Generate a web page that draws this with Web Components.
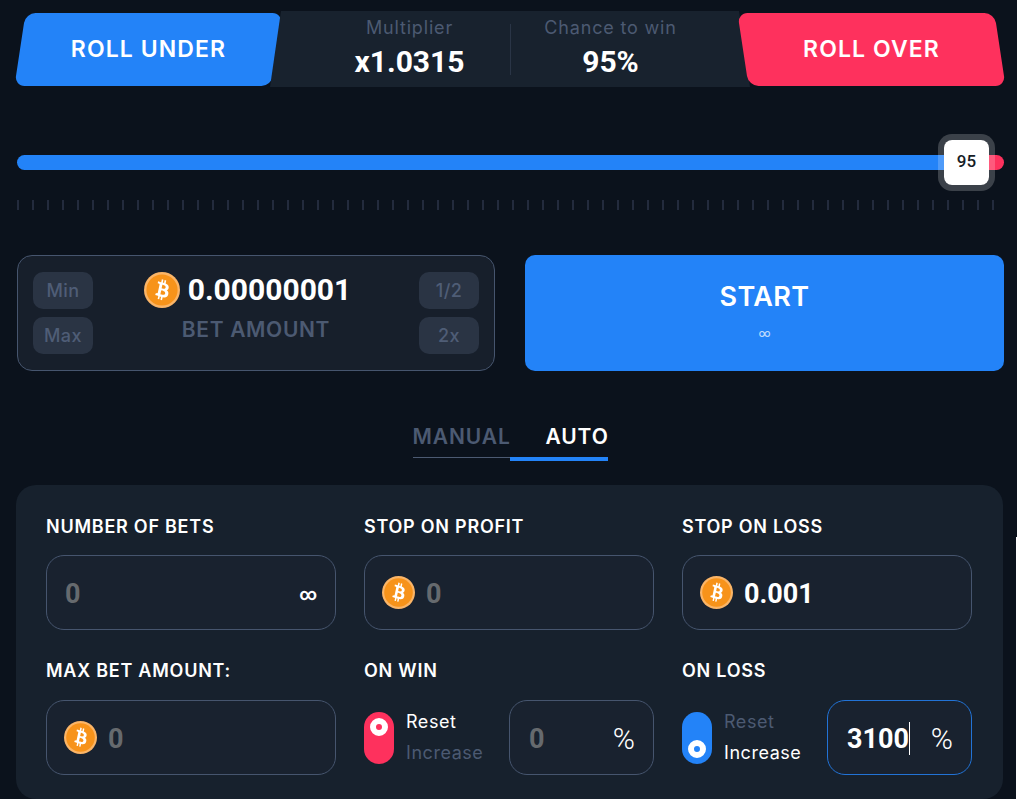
<!DOCTYPE html>
<html>
<head>
<meta charset="utf-8">
<title>Dice</title>
<style>
  html { overflow: hidden; }
  body {
    position: relative;
    margin: 0;
    height: 799px;
    overflow: hidden;
    background-color: #0b121c;
    color: #fff;
    font-family: Inter, 'Open Sans', sans-serif;
  }
  /* 1px white sliver on the right edge of the capture */
  body::after {
    content: '';
    position: absolute;
    top: 537px;
    right: 0;
    bottom: 0;
    width: 1px;
    background-color: #fff;
  }
</style>
</head>
<body>
<dice-app></dice-app>

<script>
// small helper so every element below stays short
function define(name, css, html) {
  customElements.define(name, class extends HTMLElement {
    constructor() {
      super();
      this.attachShadow({ mode: 'open' });
    }
    connectedCallback() {
      const attr = (key, fallback = '') => this.getAttribute(key) ?? fallback;
      this.shadowRoot.innerHTML = `<style>${css}</style>${typeof html === 'function' ? html(attr) : html}`;
    }
  });
}

define('coin-icon', `
  :host { display: block; width: var(--size, 36px); height: var(--size, 36px); flex: none; }
  svg { display: block; width: 100%; height: 100%; }
`, `
  <svg viewBox="0 0 36 36">
    <circle cx="18" cy="18" r="18" fill="#fbb567"/>
    <circle cx="18" cy="18" r="15.6" fill="#f7931a"/>
    <g transform="translate(18 18) scale(1.18 1.38) translate(-11.6 -12)">
      <path fill="#fff" d="M17.288 10.291c.24-1.59-.974-2.45-2.64-3.03l.54-2.153-1.315-.33-.525 2.107c-.345-.087-.705-.167-1.064-.25l.526-2.127-1.32-.33-.54 2.165c-.285-.067-.565-.132-.84-.2l-1.815-.45-.35 1.407s.975.225.955.236c.535.136.63.486.615.766l-1.477 5.92c-.075.166-.24.406-.614.314.015.02-.96-.24-.96-.24l-.66 1.51 1.71.426.93.242-.54 2.19 1.32.327.54-2.17c.36.1.705.19 1.05.273l-.51 2.154 1.32.33.545-2.19c2.24.427 3.93.257 4.64-1.774.57-1.637-.03-2.58-1.217-3.196.854-.193 1.5-.76 1.68-1.93h.01zm-3.01 4.22c-.404 1.64-3.157.75-4.05.53l.72-2.9c.896.23 3.757.67 3.33 2.37zm.41-4.24c-.37 1.49-2.662.735-3.405.55l.654-2.64c.744.18 3.137.524 2.75 2.084v.006z"/>
    </g>
  </svg>
`);

define('roll-button', `
  :host {
    position: relative;
    display: flex;
    align-items: center;
    justify-content: center;
    flex: none;
    width: 265px;
    height: 73px;
    font-size: 23px;
    font-weight: 600;
    letter-spacing: 1.1px;
  }
  .shape {
    position: absolute;
    inset: 0 4px;
    border-radius: 10px;
    background-color: var(--color);
    transform: skewX(var(--skew));
  }
  span { position: relative; }
`, attr => `<div class="shape"></div><span>${attr('label')}</span>`);

define('stat-item', `
  :host { display: block; width: 200px; text-align: center; }
  .label { height: 24px; margin-top: 5px; font-size: 18px; line-height: 24px; letter-spacing: .82px; color: #4c5a72; }
  .value { margin-top: 4px; font-family: Roboto, sans-serif; font-size: 30px; line-height: 36px; font-weight: 700; }
`, attr => `<div class="label">${attr('label')}</div><div class="value">${attr('value')}</div>`);

define('roll-header', `
  :host {
    display: flex;
    align-items: center;
    height: 76px;
    margin-top: 11px;
  }
  .stats {
    flex: 1;
    align-self: stretch;
    display: flex;
    justify-content: center;
    margin: 0 -11px;
    background-color: #18222e;
    clip-path: polygon(11px 0, calc(100% - 11px) 0, 100% 100%, 0 100%);
  }
  .divider { align-self: center; width: 1px; height: 51px; background-color: #2a3546; }
`, `
  <roll-button label="ROLL UNDER" style="--color:#2383f8;--skew:-8.6deg"></roll-button>
  <div class="stats">
    <stat-item label="Multiplier" value="x1.0315"></stat-item>
    <div class="divider"></div>
    <stat-item label="Chance to win" value="95%"></stat-item>
  </div>
  <roll-button label="ROLL OVER" style="--color:#fe315d;--skew:8.6deg"></roll-button>
`);

define('roll-slider', `
  :host { display: block; margin: 68px 0 0 1px; }
  .track {
    position: relative;
    height: 15px;
    border-radius: 8px;
    background: linear-gradient(90deg, #2383f8 949px, #fe315d 949px);
  }
  .thumb {
    position: absolute;
    left: 921px;
    top: -21px;
    box-sizing: border-box;
    width: 57px;
    height: 57px;
    padding-bottom: 3px;
    border: 6px solid rgba(255, 255, 255, .2);
    border-radius: 14px;
    background-color: #fff;
    background-clip: padding-box;
    display: flex;
    align-items: center;
    justify-content: center;
    color: #161c26;
    font-family: Roboto, sans-serif;
    font-size: 17px;
    font-weight: 500;
  }
  .ticks {
    height: 10px;
    margin-top: 30px;
    background: repeating-linear-gradient(90deg, #232b3d 0, #232b3d 2px, transparent 2px, transparent 15px) 0 0 / 977px 10px no-repeat;
  }
`, `
  <div class="track"><div class="thumb">95</div></div>
  <div class="ticks"></div>
`);

define('small-button', `
  :host {
    display: flex;
    align-items: center;
    justify-content: center;
    width: 60px;
    height: 37px;
    border-radius: 10px;
    background-color: #2a3444;
    color: #4f5d76;
    font-size: 18px;
    font-weight: 500;
    letter-spacing: .4px;
  }
`, `<slot></slot>`);

define('bet-box', `
  :host {
    box-sizing: border-box;
    flex: none;
    display: flex;
    justify-content: space-between;
    width: 478px;
    height: 116px;
    padding: 16px 15px;
    border: 1px solid #46556e;
    border-radius: 15px;
    background-color: #171f2b;
  }
  .col { display: flex; flex-direction: column; gap: 8px; }
  .middle { flex: 1; display: flex; flex-direction: column; align-items: center; }
  .amount { display: flex; align-items: center; gap: 8px; height: 36px; padding-right: 17px; font-family: Roboto, sans-serif; font-size: 30px; font-weight: 700; }
  .amount span { margin-top: -2px; }
  .caption { margin-top: 10px; font-size: 21px; line-height: 24px; font-weight: 600; letter-spacing: .65px; color: #4c5a72; }
`, `
  <div class="col"><small-button>Min</small-button><small-button>Max</small-button></div>
  <div class="middle">
    <div class="amount"><coin-icon></coin-icon><span>0.00000001</span></div>
    <div class="caption">BET AMOUNT</div>
  </div>
  <div class="col"><small-button>1/2</small-button><small-button>2x</small-button></div>
`);

define('start-button', `
  :host {
    flex: 1;
    display: flex;
    flex-direction: column;
    align-items: center;
    height: 116px;
    border-radius: 10px;
    background-color: #2383f8;
  }
  .title { margin-top: 26px; font-size: 27px; line-height: 32px; font-weight: 600; letter-spacing: .4px; }
  .sub { margin-top: 10px; font-size: 13px; line-height: 20px; color: #bcd9fc; }
`, `<div class="title">START</div><div class="sub">∞</div>`);

define('mode-tabs', `
  :host { display: flex; justify-content: center; align-items: flex-start; height: 114px; box-sizing: border-box; padding-top: 51px; }
  .tab { box-sizing: border-box; height: 39px; font-size: 21px; line-height: 30px; font-weight: 600; letter-spacing: .9px; white-space: nowrap; }
  .manual { width: 97px; color: #4c5a72; border-bottom: 1px solid #4c5a72; height: 36px; }
  .auto { width: 98px; padding-left: 36px; color: #fff; border-bottom: 4px solid #2383f8; }
`, `<div class="tab manual">MANUAL</div><div class="tab auto">AUTO</div>`);

define('input-box', `
  :host {
    box-sizing: border-box;
    display: flex;
    align-items: center;
    height: 75px;
    padding: 2px 18px 0 var(--pad, 18px);
    border: 1px solid var(--edge, #46556e);
    border-radius: 18px;
    background-color: #19222f;
    font-family: Roboto, sans-serif;
    font-size: 27px;
    font-weight: 700;
    min-width: 0;
    flex: 1;
  }
  coin-icon { --size: 33px; margin: -2px 11px 0 -1px; }
  .value { flex: 1; color: var(--value, #666a6e); }
  .caret { display: inline-block; width: 1px; height: 33px; background-color: #fff; vertical-align: -7px; }
  .unit { font-weight: 300; color: #fff; font-size: 30px; }
  .unit.inf { font-size: 17px; font-weight: 700; }
`, attr => `
  ${attr('icon') ? '<coin-icon></coin-icon>' : ''}
  <span class="value">${attr('value')}${attr('caret') ? '<span class="caret"></span>' : ''}</span>
  <span class="unit ${attr('unit') === '∞' ? 'inf' : ''}">${attr('unit')}</span>
`);

define('field-block', `
  :host { display: block; min-width: 0; }
  .label { height: 20px; margin-bottom: var(--gap, 18px); font-size: 18px; line-height: 20px; font-weight: 600; letter-spacing: .75px; white-space: nowrap; }
  .body { display: flex; align-items: center; }
`, attr => `<div class="label">${attr('label')}</div><div class="body"><slot></slot></div>`);

define('toggle-pick', `
  :host { flex: none; display: flex; align-items: center; gap: 12px; width: 145px; font-size: 18px; letter-spacing: .55px; }
  .pill {
    display: flex;
    flex-direction: column;
    justify-content: var(--align);
    box-sizing: border-box;
    width: 30px;
    height: 52px;
    padding: 6px;
    border-radius: 15px;
    background-color: var(--color);
  }
  .dot {
    width: 6px;
    height: 6px;
    border: 6px solid #fff;
    border-radius: 50%;
  }
  .texts { display: flex; flex-direction: column; gap: 9px; line-height: 22px; }
  .off { color: #4c5a72; }
`, attr => {
  const reset = attr('active') === 'reset';
  return `
    <div class="pill" style="--color:${reset ? '#fe315d' : '#2383f8'};--align:${reset ? 'flex-start' : 'flex-end'}"><div class="dot"></div></div>
    <div class="texts">
      <div class="${reset ? '' : 'off'}">Reset</div>
      <div class="${reset ? 'off' : ''}">Increase</div>
    </div>`;
});

define('auto-panel', `
  :host {
    display: grid;
    grid-template-columns: repeat(3, 290px);
    column-gap: 28px;
    row-gap: 31px;
    margin-right: 1px;
    padding: 32px 29px 24px 30px;
    border-radius: 20px;
    background-color: #17212d;
  }
  .low { --gap: 19px; }
`, `
  <field-block label="NUMBER OF BETS"><input-box value="0" unit="∞"></input-box></field-block>
  <field-block label="STOP ON PROFIT"><input-box icon="1" value="0"></input-box></field-block>
  <field-block label="STOP ON LOSS"><input-box icon="1" value="0.001" style="--value:#fff"></input-box></field-block>
  <field-block class="low" label="MAX BET AMOUNT:"><input-box icon="1" value="0"></input-box></field-block>
  <field-block class="low" label="ON WIN"><toggle-pick active="reset"></toggle-pick><input-box value="0" unit="%" style="--pad:19px"></input-box></field-block>
  <field-block class="low" label="ON LOSS"><toggle-pick active="increase"></toggle-pick><input-box value="3100" caret="1" unit="%" style="--value:#fff;--edge:#2273d6;--pad:19px"></input-box></field-block>
`);

define('dice-app', `
  :host { display: block; width: 988px; margin-left: 16px; }
  .row { display: flex; gap: 30px; margin: 45px 0 0 1px; }
`, `
  <roll-header></roll-header>
  <roll-slider></roll-slider>
  <div class="row"><bet-box></bet-box><start-button></start-button></div>
  <mode-tabs></mode-tabs>
  <auto-panel></auto-panel>
`);
</script>
</body>
</html>
